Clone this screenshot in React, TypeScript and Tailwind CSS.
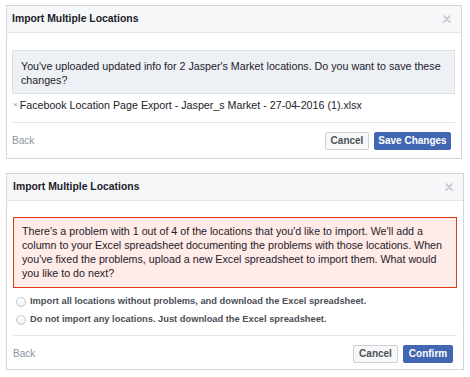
import React from "react";

const font = { fontFamily: '"Liberation Sans", Arial, Helvetica, sans-serif' };

function CloseIcon() {
  return (
    <svg width="8" height="8" viewBox="0 0 8 8" className="block">
      <path d="M1 1L7 7M7 1L1 7" stroke="#bec2c9" strokeWidth="1.6" strokeLinecap="round" />
    </svg>
  );
}

function Footer({ primary, cancelW, primaryW }: { primary: string; cancelW: string; primaryW: string }) {
  return (
    <div className="flex items-start justify-between pr-[4px]">
      <span className="mt-[1px] text-[10px] text-[#8a93a3]">Back</span>
      <div className="flex gap-[5px]">
        <button className={`h-[18px] ${cancelW} rounded-[2px] border border-[#ced0d4] bg-[#f6f7f9] text-[10px] font-bold text-[#4b4f56]`}>
          Cancel
        </button>
        <button className={`h-[18px] ${primaryW} rounded-[2px] border border-[#4267b2] bg-[#4267b2] text-[10px] font-bold text-white`}>
          {primary}
        </button>
      </div>
    </div>
  );
}

function Radio({ label }: { label: string }) {
  return (
    <div className="flex h-[18px] items-center">
      <span className="ml-[3px] mr-[4px] h-[10px] w-[10px] rounded-full border border-[#c4c7cc] bg-gradient-to-b from-white to-[#eef0f2]" />
      <span className="text-[9.3px] font-bold text-[#4b4f56]">{label}</span>
    </div>
  );
}

export default function App() {
  return (
    <div className="h-[377px] w-[470px] bg-white pl-[6px] pt-[5px]" style={font}>
      <div className="w-[456px] border border-[#d3d5d8] bg-white">
        <div className="flex h-[27px] items-center justify-between border-b border-[#e5e5e5] bg-[#f6f7f9] pl-[5px] pr-[10px]">
          <span className="text-[10.4px] font-bold text-[#1d2129]">Import Multiple Locations</span>
          <CloseIcon />
        </div>
        <div className="pl-[5px] pr-[6px] pb-[8px]">
          <div className="mt-[17px] border border-[#dddfe2] bg-[#edf0f5] pl-[8px] pr-[2px] pt-[8px] pb-[5px] text-[10.7px] leading-[14.3px] text-[#1d2129]">
            You've uploaded updated info for 2 Jasper's Market locations. Do you want to save these changes?
          </div>
          <div className="mt-[4px] flex h-[14px] items-center text-[10.7px] text-[#1d2129]">
            <span className="mr-[2px] ml-[1px] text-[8px] text-[#9197a3]">×</span>
            Facebook Location Page Export - Jasper_s Market - 27-04-2016 (1).xlsx
          </div>
          <div className="mt-[10px] h-px bg-[#e5e5e5]" />
          <div className="mt-[9px]">
            <Footer primary="Save Changes" cancelW="w-[44px]" primaryW="w-[77px]" />
          </div>
        </div>
      </div>

      <div className="mt-[14px] w-[458px] border border-[#d3d5d8] bg-white">
        <div className="flex h-[27px] items-center justify-between border-b border-[#e5e5e5] bg-[#f6f7f9] pl-[6px] pr-[10px]">
          <span className="text-[10.4px] font-bold text-[#1d2129]">Import Multiple Locations</span>
          <CloseIcon />
        </div>
        <div className="px-[6px] pb-[6px]">
          <div className="mt-[16px] border border-[#dd3c10] bg-[#ffebe8] pl-[8px] pr-[2px] pt-[6px] pb-[6px] text-[10.7px] leading-[14.3px] text-[#1d2129]">
            There's a problem with 1 out of 4 of the locations that you'd like to import. We'll add a column to your Excel spreadsheet documenting the problems with those locations. When you've fixed the problems, upload a new Excel spreadsheet to import them. What would you like to do next?
          </div>
          <div className="mt-[5px]">
            <Radio label="Import all locations without problems, and download the Excel spreadsheet." />
            <Radio label="Do not import any locations. Just download the Excel spreadsheet." />
          </div>
          <div className="mt-[6px] h-px bg-[#e5e5e5]" />
          <div className="mt-[9px]">
            <Footer primary="Confirm" cancelW="w-[45px]" primaryW="w-[50px]" />
          </div>
        </div>
      </div>
    </div>
  );
}
